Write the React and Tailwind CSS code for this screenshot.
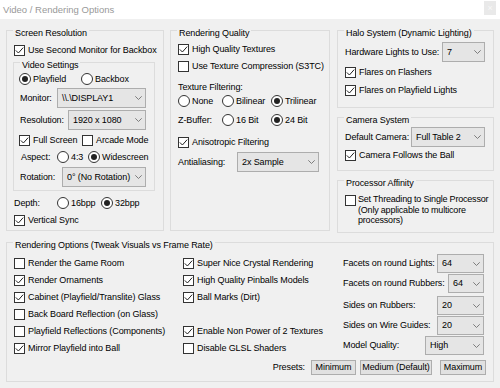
import React from 'react';

function Group({ title, className = '', children }) {
  return (
    <div className={`relative border border-[#dcdcdc] ${className}`}>
      <span className="absolute left-[6px] top-[-3px] bg-[#f0f0f0] px-[2px] leading-[11px] whitespace-nowrap">
        {title}
      </span>
      {children}
    </div>
  );
}

function Box({ checked }) {
  return (
    <span className="flex h-[11px] w-[11px] shrink-0 items-center justify-center border border-[#333] bg-white">
      {checked && (
        <svg width="9" height="9" viewBox="0 0 9 9">
          <path d="M0.8 4.4 L3.4 7 L8.2 1.6" fill="none" stroke="#222" strokeWidth="1" />
        </svg>
      )}
    </span>
  );
}

function Check({ checked, label, className = '' }) {
  return (
    <div className={`flex h-[12px] items-center ${className}`}>
      <Box checked={checked} />
      <span className="ml-[3px] whitespace-nowrap">{label}</span>
    </div>
  );
}

function Radio({ checked, label, className = '' }) {
  return (
    <div className={`flex h-[12px] items-center ${className}`}>
      <span className="flex h-[12px] w-[12px] shrink-0 items-center justify-center rounded-full border border-[#333] bg-white">
        {checked && <span className="h-[6px] w-[6px] rounded-full bg-[#222]" />}
      </span>
      <span className="ml-[2px] whitespace-nowrap">{label}</span>
    </div>
  );
}

function Select({ value, className = '' }) {
  return (
    <div
      className={`flex items-center justify-between border border-[#adadad] bg-[#e5e5e5] pl-[4px] pr-[3px] ${className}`}
    >
      <span className="whitespace-nowrap">{value}</span>
      <svg width="7" height="4" viewBox="0 0 7 4" className="shrink-0">
        <path d="M0.3 0.3 L3.5 3.5 L6.7 0.3" fill="none" stroke="#707070" strokeWidth="0.9" />
      </svg>
    </div>
  );
}

function Btn({ children, className = '' }) {
  return (
    <button
      className={`flex h-[15px] items-center justify-center whitespace-nowrap border border-[#adadad] bg-[#e1e1e1] text-black ${className}`}
    >
      {children}
    </button>
  );
}

function FacetRow({ label, value, labelW, selectW, className = '' }) {
  return (
    <div className={`flex h-[19px] items-center ${className}`}>
      <span className={`whitespace-nowrap ${labelW}`}>{label}</span>
      <Select value={value} className={`h-[19px] ${selectW}`} />
    </div>
  );
}

export default function App() {
  return (
    <div className="h-[388px] w-[500px] overflow-hidden bg-white font-['Liberation_Sans',Arial,sans-serif] text-[9px] leading-[11px] tracking-[-0.1px] text-black">
      {/* title bar */}
      <div className="flex h-[19px] items-start">
        <span className="ml-[3px] mt-[4px] text-[9.5px] leading-[12px] tracking-normal text-[#999]">Video / Rendering Options</span>
        <div className="ml-auto mr-[4px] mt-[1px] flex h-[14px] w-[12px] items-center justify-center bg-[#e9e9e9] text-[9px] text-[#f8f8f8]">
          ×
        </div>
      </div>

      <div className="h-[369px] bg-[#f0f0f0] px-[6px] pt-[11px]">
        <div className="flex items-start">
          {/* Screen Resolution */}
          <Group title="Screen Resolution" className="h-[201px] w-[158px]">
            <div className="flex flex-col pl-[7px] pt-[13px]">
              <Check checked label="Use Second Monitor for Backbox" />
              <Group title="Video Settings" className="ml-[-1px] mt-[6px] h-[129px] w-[142px]">
                <div className="flex flex-col pl-[5px] pt-[10px]">
                  <div className="flex">
                    <Radio checked label="Playfield" className="w-[62px]" />
                    <Radio label="Backbox" />
                  </div>
                  <div className="mt-[3px] flex h-[20px] items-center">
                    <span className="ml-[1px] w-[37px]">Monitor:</span>
                    <Select value={'\\\\.\\DISPLAY1'} className="h-[20px] w-[89px]" />
                  </div>
                  <div className="mt-[2px] flex h-[20px] items-center">
                    <span className="ml-[1px] w-[48px]">Resolution:</span>
                    <Select value="1920 x 1080" className="h-[20px] w-[78px]" />
                  </div>
                  <div className="mt-[4px] flex">
                    <Check checked label="Full Screen" className="w-[63px]" />
                    <Check label="Arcade Mode" />
                  </div>
                  <div className="mt-[5px] flex h-[12px] items-center">
                    <span className="ml-[2px] w-[36px]">Aspect:</span>
                    <Radio label="4:3" className="w-[31px]" />
                    <Radio checked label="Widescreen" />
                  </div>
                  <div className="mt-[4px] flex h-[20px] items-center">
                    <span className="ml-[1px] w-[42px]">Rotation:</span>
                    <Select value="0° (No Rotation)" className="h-[20px] w-[84px]" />
                  </div>
                </div>
              </Group>
              <div className="mt-[6px] flex h-[12px] items-center">
                <span className="w-[43px]">Depth:</span>
                <Radio label="16bpp" className="w-[44px]" />
                <Radio checked label="32bpp" />
              </div>
              <Check checked label="Vertical Sync" className="mt-[5px]" />
            </div>
          </Group>

          {/* Rendering Quality */}
          <Group title="Rendering Quality" className="ml-[6px] h-[201px] w-[160px]">
            <div className="flex flex-col pl-[7px] pt-[12px]">
              <Check checked label="High Quality Textures" />
              <Check label="Use Texture Compression (S3TC)" className="mt-[5px]" />
              <div className="mt-[9px] flex h-[12px] items-center">Texture Filtering:</div>
              <div className="mt-[2px] flex">
                <Radio label="None" className="w-[44px]" />
                <Radio label="Bilinear" className="w-[49px]" />
                <Radio checked label="Trilinear" />
              </div>
              <div className="mt-[7px] flex h-[12px] items-center">
                <span className="w-[44px]">Z-Buffer:</span>
                <Radio label="16 Bit" className="w-[49px]" />
                <Radio checked label="24 Bit" />
              </div>
              <Check checked label="Anisotropic Filtering" className="mt-[10px]" />
              <div className="mt-[4px] flex h-[20px] items-center">
                <span className="w-[59px]">Antialiasing:</span>
                <Select value="2x Sample" className="h-[20px] w-[82px]" />
              </div>
            </div>
          </Group>

          {/* right column */}
          <div className="ml-[7px] flex w-[157px] flex-col">
            <Group title="Halo System (Dynamic Lighting)" className="h-[78px]">
              <div className="flex flex-col pl-[7px] pt-[11px]">
                <div className="flex h-[20px] items-center">
                  <span className="w-[97px] whitespace-nowrap">Hardware Lights to Use:</span>
                  <Select value="7" className="h-[20px] w-[43px]" />
                </div>
                <Check checked label="Flares on Flashers" className="mt-[4px]" />
                <Check checked label="Flares on Playfield Lights" className="mt-[6px]" />
              </div>
            </Group>
            <Group title="Camera System" className="mt-[9px] h-[54px]">
              <div className="flex flex-col pl-[7px] pt-[9px]">
                <div className="flex h-[20px] items-center">
                  <span className="w-[66px] whitespace-nowrap">Default Camera:</span>
                  <Select value="Full Table 2" className="h-[20px] w-[74px]" />
                </div>
                <Check checked label="Camera Follows the Ball" className="mt-[2px]" />
              </div>
            </Group>
            <Group title="Processor Affinity" className="mt-[9px] h-[53px]">
              <div className="flex items-start pl-[7px] pt-[14px]">
                <Box />
                <div className="ml-[2px] mt-[-1px] whitespace-nowrap leading-[10.5px] tracking-[-0.2px]">
                  Set Threading to Single Processor
                  <br />
                  (Only applicable to multicore
                  <br />
                  processors)
                </div>
              </div>
            </Group>
          </div>
        </div>

        {/* Rendering Options */}
        <Group title="Rendering Options (Tweak Visuals vs Frame Rate)" className="mt-[9px] h-[140px]">
          <div className="flex items-start">
            <div className="flex w-[176px] flex-col gap-[5px] pl-[7px] pt-[14px]">
              <Check label="Render the Game Room" />
              <Check checked label="Render Ornaments" />
              <Check checked label="Cabinet (Playfield/Translite) Glass" />
              <Check label="Back Board Reflection (on Glass)" />
              <Check label="Playfield Reflections (Components)" />
              <Check checked label="Mirror Playfield into Ball" />
            </div>
            <div className="flex w-[160px] flex-col gap-[5px] pt-[14px]">
              <Check checked label="Super Nice Crystal Rendering" />
              <Check checked label="High Quality Pinballs Models" />
              <Check checked label="Ball Marks (Dirt)" />
              <div className="h-[12px]" />
              <Check checked label="Enable Non Power of 2 Textures" />
              <Check label="Disable GLSL Shaders" />
            </div>
            <div className="flex flex-col pt-[11px]">
              <FacetRow label="Facets on round Lights:" value="64" labelW="w-[94px]" selectW="w-[47px]" />
              <FacetRow label="Facets on round Rubbers:" value="64" labelW="w-[105px]" selectW="w-[36px]" className="mt-[1px]" />
              <FacetRow label="Sides on Rubbers:" value="20" labelW="w-[94px]" selectW="w-[47px]" className="mt-[3px]" />
              <FacetRow label="Sides on Wire Guides:" value="20" labelW="w-[94px]" selectW="w-[47px]" className="mt-[1px]" />
              <FacetRow label="Model Quality:" value="High" labelW="w-[82px]" selectW="w-[59px]" className="mt-[1px]" />
            </div>
          </div>
          <div className="mt-[5px] flex items-center justify-end pr-[7px]">
            <span>Presets:</span>
            <Btn className="ml-[6px] w-[45px]">Minimum</Btn>
            <Btn className="ml-[4px] w-[72px]">Medium (Default)</Btn>
            <Btn className="ml-[8px] w-[46px]">Maximum</Btn>
          </div>
        </Group>
      </div>
    </div>
  );
}
